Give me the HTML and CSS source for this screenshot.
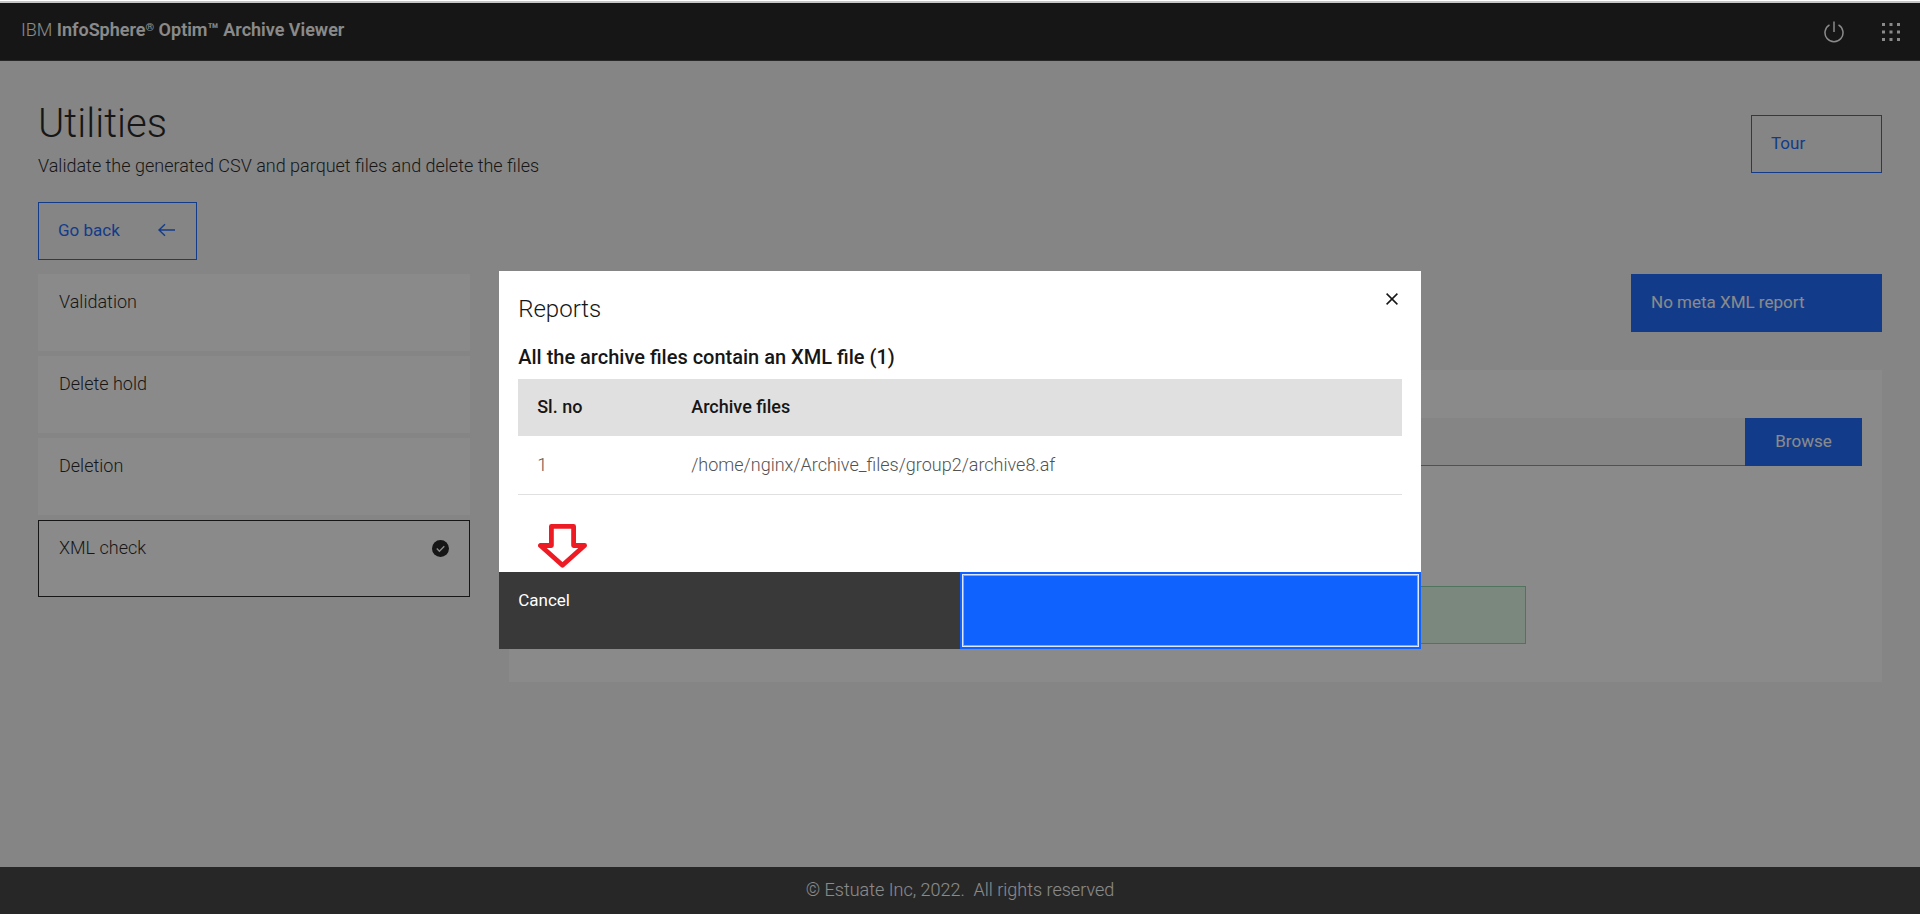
FILE: index.html
```html
<!DOCTYPE html>
<html lang="en">
<head>
<meta charset="utf-8">
<meta name="viewport" content="width=device-width, initial-scale=1">
<title>IBM InfoSphere Optim Archive Viewer</title>
<link rel="stylesheet" href="styles.css">
</head>
<body>
<div class="top-strip"></div>
<header class="header">
  <div class="header-name">IBM <strong>InfoSphere<span class="mark">®</span> Optim™ Archive Viewer</strong></div>
  <div class="header-actions">
    <button class="icon-button" type="button" aria-label="Log out">
      <svg class="icon-large" viewBox="0 0 32 32" fill="currentColor"><path d="M22.5 5.742l-1 1.73a11 11 0 1 1-11 0l-1-1.73a13 13 0 1 0 13 0z"/><path d="M15 2h2v14h-2z"/></svg>
    </button>
    <button class="icon-button" type="button" aria-label="App switcher">
      <svg class="icon-large" viewBox="0 0 24 24" fill="currentColor"><path d="M3 3h3v3H3zM10.500 3h3v3h-3zM18 3h3v3h-3zM3 10.500h3v3H3zM10.500 10.500h3v3h-3zM18 10.500h3v3h-3zM3 18h3v3H3zM10.500 18h3v3h-3zM18 18h3v3h-3z"/></svg>
    </button>
  </div>
</header>

<main class="main">
  <div class="page-head">
    <div>
      <h1 class="page-title">Utilities</h1>
      <p class="page-text">Validate the generated CSV and parquet files and delete the files</p>
    </div>
    <button class="button button-outline button-tour" type="button">Tour</button>
  </div>
  <button class="button button-outline button-back" type="button">Go back
    <svg class="icon-arrow" viewBox="0 0 20 20" fill="none" stroke="currentColor" stroke-width="1.400"><path d="M18 10H2M8 4.200L2 10l6 5.800"/></svg>
  </button>

  <div class="columns">
    <fieldset class="tiles">
      <label class="tile"><input class="tile-input" type="radio" name="utility">Validation</label>
      <label class="tile"><input class="tile-input" type="radio" name="utility">Delete hold</label>
      <label class="tile"><input class="tile-input" type="radio" name="utility">Deletion</label>
      <label class="tile tile-selected"><input class="tile-input" type="radio" name="utility" checked>XML check
        <svg class="icon-check" viewBox="0 0 17 17"><circle cx="8.500" cy="8.500" r="8.500" fill="#161616"/><path d="M4.800 8.600l2.600 2.600 4.900-4.900" fill="none" stroke="#fff" stroke-width="1.400"/></svg>
      </label>
    </fieldset>
    <section class="work">
      <button class="button button-primary button-report" type="button">No meta XML report</button>
      <div class="panel">
        <div class="file-row">
          <input class="file-input" type="text" aria-label="Archive file">
          <button class="button button-primary button-browse" type="button">Browse</button>
        </div>
        <div class="notice"></div>
      </div>
    </section>
  </div>
</main>

<footer class="footer">© Estuate Inc, 2022.&nbsp; All rights reserved</footer>

<div class="overlay">
  <div class="modal" role="dialog" aria-modal="true" aria-labelledby="modal-title">
    <div class="modal-head">
      <h2 class="modal-title" id="modal-title">Reports</h2>
      <button class="close-button" type="button" aria-label="Close">
        <svg class="icon-close" viewBox="0 0 12 12" fill="none" stroke="currentColor" stroke-width="1.500"><path d="M.6.6l10.800 10.800M11.400.6L.6 11.400"/></svg>
      </button>
    </div>
    <div class="modal-body">
      <h3 class="modal-heading">All the archive files contain an XML file (1)</h3>
      <table class="table">
        <thead><tr><th class="col-number" scope="col">Sl. no</th><th scope="col">Archive files</th></tr></thead>
        <tbody><tr><td>1</td><td>/home/nginx/Archive_files/group2/archive8.af</td></tr></tbody>
      </table>
    </div>
    <div class="modal-footer">
      <button class="modal-button modal-cancel" type="button">Cancel</button>
      <button class="modal-button modal-submit" type="button" aria-label="Submit"></button>
    </div>
    <svg class="pointer-arrow" viewBox="0 0 49 44" fill="none" stroke="#ed1c24" stroke-width="4.800" stroke-linejoin="round"><path d="M13.400 2.400h22.200V21.500h11L24.500 41.200 2.400 21.500h11z"/></svg>
  </div>
</div>
</body>
</html>
```
FILE: styles.css
```css
* {
  box-sizing: border-box;
}

body {
  display: flex;
  flex-direction: column;
  min-height: 100vh;
  margin: 0;
  background: #f4f4f4;
  color: #161616;
  font-family: Roboto, "Liberation Sans", sans-serif;
  font-size: 18px;
  font-weight: 300;
  line-height: 22px;
}

button,
input {
  font: inherit;
}

h1,
h2,
h3,
p {
  margin: 0;
}

svg {
  display: block;
}

.top-strip {
  height: 3px;
  border-top: 1px solid #fff;
  background: #c6c6c6;
}

.header {
  display: flex;
  justify-content: space-between;
  align-items: flex-start;
  padding: 16px 17px 19px 21px;
  border-bottom: 1px solid #393939;
  background: #161616;
  color: #fff;
}

.header-name strong {
  font-weight: 600;
}

.mark {
  font-size: 11px;
  line-height: 11px;
  vertical-align: 5px;
}

.header-actions {
  display: flex;
  gap: 33px;
  padding-top: 1px;
}

.icon-button {
  padding: 0;
  border: 0;
  background: none;
  color: #fff;
}

.icon-large {
  width: 24px;
  height: 24px;
  margin-bottom: -3px;
}

.main {
  flex: 1;
  padding: 40px 38px;
}

.page-head {
  display: flex;
  justify-content: space-between;
  align-items: flex-start;
  margin-bottom: 25px;
}

.page-title {
  margin-bottom: 8px;
  font-size: 40px;
  font-weight: 300;
  line-height: 46px;
}

.button {
  display: flex;
  align-items: center;
  padding: 16px 19px 18px;
  border: 1px solid transparent;
  font-size: 17px;
  font-weight: 400;
  text-align: left;
}

.button-outline {
  border-color: #0f62fe;
  background: transparent;
  color: #0f62fe;
}

.button-primary {
  background: #0f62fe;
  color: #fff;
}

.button-tour {
  width: 131px;
  margin-top: 14px;
}

.button-back {
  justify-content: space-between;
  width: 159px;
}

.icon-arrow {
  width: 20px;
  height: 20px;
}

.columns {
  display: grid;
  grid-template-columns: minmax(0, 11fr) minmax(0, 35fr);
  gap: 39px;
  margin-top: 14px;
}

.tiles {
  display: grid;
  align-content: start;
  gap: 5px;
  margin: 0;
  padding: 0;
  border: 0;
}

.tile {
  display: flex;
  justify-content: space-between;
  align-items: flex-start;
  min-height: 77px;
  padding: 16px 20px;
  border: 1px solid #fff;
  background: #fff;
}

.tile-selected {
  border-color: #161616;
}

.tile-input {
  position: absolute;
  opacity: 0;
}

.icon-check {
  width: 17px;
  height: 17px;
  margin-top: 3px;
}

.work {
  display: flex;
  flex-direction: column;
}

.button-report {
  align-self: flex-end;
  width: 251px;
}

.panel {
  margin-top: 38px;
  padding: 48px 20px 38px;
  background: #fff;
}

.file-row {
  display: flex;
}

.file-input {
  flex: 1;
  min-width: 0;
  height: 48px;
  border: 0;
  border-bottom: 1px solid #8d8d8d;
  background: #f4f4f4;
}

.button-browse {
  justify-content: center;
  width: 117px;
  padding: 11px 19px 13px;
}

.notice {
  height: 58px;
  margin: 120px 336px 0 0;
  border: 1px solid #8ed2a6;
  background: #defbe6;
}

.footer {
  padding: 12px 20px 13px;
  background: #393939;
  color: #fff;
  text-align: center;
}

.overlay {
  position: fixed;
  inset: 3px 0 0;
  display: flex;
  justify-content: center;
  align-items: center;
  padding-top: 3px;
  background: rgba(22, 22, 22, 0.5);
}

.modal {
  position: relative;
  width: 48%;
  background: #fff;
}

.modal-head {
  display: flex;
  justify-content: space-between;
  align-items: flex-start;
  padding: 22px 23px 0 19px;
}

.modal-title {
  font-size: 24px;
  font-weight: 300;
  line-height: 32px;
}

.close-button {
  padding: 0;
  border: 0;
  background: none;
  color: #161616;
}

.icon-close {
  width: 12px;
  height: 12px;
}

.modal-body {
  padding: 20px 19px 77px;
}

.modal-heading {
  margin-bottom: 10px;
  font-size: 20px;
  font-weight: 500;
  line-height: 24px;
}

.table {
  width: 100%;
  border-collapse: collapse;
  table-layout: fixed;
  text-align: left;
}

.table th {
  padding: 17px 19px 18px;
  background: #e0e0e0;
  font-weight: 500;
}

.table td {
  padding: 18px 19px;
  border-bottom: 1px solid #e0e0e0;
  color: #525252;
}

.table .col-number {
  width: 154px;
}

.modal-footer {
  display: flex;
}

.modal-button {
  display: flex;
  align-items: flex-start;
  width: 50%;
  height: 77px;
  padding: 17px 19px;
  border: 0;
  color: #fff;
  font-size: 17px;
  font-weight: 400;
}

.modal-cancel {
  background: #393939;
}

.modal-submit {
  border: 2px solid #0f62fe;
  background: #0f62fe;
  box-shadow: inset 0 0 0 1px #dfe9ff, inset 0 0 0 2px #7ba6fb;
}

.pointer-arrow {
  position: absolute;
  bottom: 81px;
  left: 39px;
  width: 49px;
  height: 44px;
}
```
